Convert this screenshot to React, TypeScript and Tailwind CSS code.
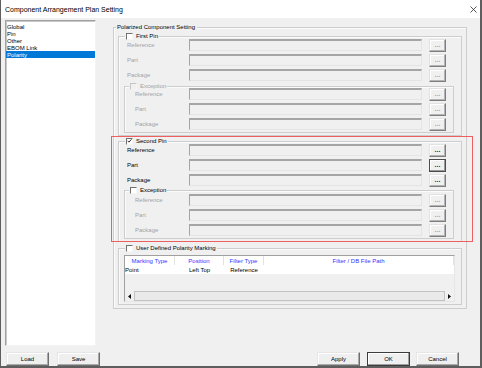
import type { ReactNode } from 'react'

const GRAY = 'text-[#a3a3a3]'

function CheckBox({ checked = false, disabled = false }: { checked?: boolean; disabled?: boolean }) {
  return (
    <span
      className={`flex h-[7px] w-[7px] shrink-0 items-center justify-center border border-r-[#f6f6f6] border-b-[#f6f6f6] ${
        disabled ? 'border-t-[#c6c6c6] border-l-[#c6c6c6] bg-[#f0f0f0]' : 'border-t-[#707070] border-l-[#707070] bg-white'
      }`}
    >
      {checked && (
        <svg width="6" height="6" viewBox="0 0 6 6">
          <path d="M0.8 2.8 L2.3 4.4 L5.3 1" stroke="#1a1a1a" strokeWidth="1.1" fill="none" />
        </svg>
      )}
    </span>
  )
}

function GroupBox({
  legend,
  legendPos,
  className,
  children,
}: {
  legend: ReactNode
  legendPos: string
  className: string
  children: ReactNode
}) {
  return (
    <div className={`relative border border-[#cdcdcd] shadow-[inset_1px_1px_0_#fbfbfb] ${className}`}>
      <div className={`absolute -top-[5px] flex h-[8px] items-center gap-[2px] bg-[#f0f0f0] px-[1px] ${legendPos}`}>
        {legend}
      </div>
      {children}
    </div>
  )
}

function Field() {
  return (
    <div className="h-[12px] w-[233px] shrink-0 border border-t-2 border-t-[#a5a5a5] border-l-[#a5a5a5] border-r-[#e4e4e4] border-b-[#e4e4e4] bg-[#f0f0f0]" />
  )
}

function DotsButton({ disabled = false, focused = false }: { disabled?: boolean; focused?: boolean }) {
  return (
    <div
      className={`ml-[7px] flex h-[13px] w-[17px] shrink-0 items-center justify-center border bg-[#f0f0f0] text-[7px] font-bold ${
        focused
          ? 'border-[#4c4c4c] shadow-[inset_-1px_-1px_0_#9a9a9a,inset_1px_1px_0_#ffffff]'
          : 'border-t-[#e2e2e2] border-l-[#e2e2e2] border-r-[#7e7e7e] border-b-[#7e7e7e] shadow-[inset_-1px_-1px_0_#b4b4b4,inset_1px_1px_0_#ffffff]'
      } ${disabled ? 'text-[#a9a9a9]' : 'text-[#303030]'}`}
    >
      <span className="-mt-[3px]">...</span>
    </div>
  )
}

function FieldRow({
  label,
  pad,
  width,
  disabled = false,
  focused = false,
}: {
  label: string
  pad: string
  width: string
  disabled?: boolean
  focused?: boolean
}) {
  return (
    <div className={`flex h-[12px] items-start ${pad}`}>
      <span className={`flex h-[12px] shrink-0 items-center ${width} ${disabled ? GRAY : 'text-black'}`}>{label}</span>
      <Field />
      <DotsButton disabled={disabled} focused={focused} />
    </div>
  )
}

function PinGroup({
  title,
  checked,
  enabled,
  exceptionEnabled,
  mt,
  exPad,
}: {
  title: string
  checked: boolean
  enabled: boolean
  exceptionEnabled: boolean
  mt: string
  exPad: string
}) {
  return (
    <GroupBox
      className={`ml-[4px] w-[344px] pb-[2px] pt-[2px] ${mt}`}
      legendPos="left-[6px]"
      legend={
        <>
          <CheckBox checked={checked} />
          <span className="ml-[1px] text-black">{title}</span>
        </>
      }
    >
      <div className="flex flex-col gap-[3px]">
        <FieldRow label="Reference" pad="pl-[8px]" width="w-[62px]" disabled={!enabled} />
        <FieldRow label="Part" pad="pl-[8px]" width="w-[62px]" disabled={!enabled} focused={enabled} />
        <FieldRow label="Package" pad="pl-[8px]" width="w-[62px]" disabled={!enabled} />
      </div>
      <GroupBox
        className={`ml-[5px] w-[330px] pb-[2px] ${exPad} ${enabled ? 'mt-[4px]' : 'mt-[5px]'}`}
        legendPos="left-[4px]"
        legend={
          <>
            <CheckBox disabled={!exceptionEnabled} />
            <span className={`ml-[1px] ${exceptionEnabled ? 'text-black' : GRAY}`}>Exception</span>
          </>
        }
      >
        <div className="flex flex-col gap-[3px]">
          <FieldRow label="Reference" pad="pl-[10px]" width="w-[54px]" disabled />
          <FieldRow label="Part" pad="pl-[10px]" width="w-[54px]" disabled />
          <FieldRow label="Package" pad="pl-[10px]" width="w-[54px]" disabled />
        </div>
      </GroupBox>
    </GroupBox>
  )
}

function Arrow({ dir }: { dir: 'left' | 'right' }) {
  return (
    <svg width="3" height="5" viewBox="0 0 3 5">
      <path d={dir === 'left' ? 'M3 0 L0 2.5 L3 5 Z' : 'M0 0 L3 2.5 L0 5 Z'} fill="#111" />
    </svg>
  )
}

function MarkingTable() {
  const head = 'flex h-full items-center justify-center border-r border-[#e2e2e2] text-[#3434ff]'
  return (
    <div className="ml-[5px] flex h-[47px] w-[331px] flex-col border border-t-[#a0a0a0] border-l-[#a0a0a0] border-r-[#e6e6e6] border-b-[#e6e6e6] bg-[#f0f0f0]">
      <div className="flex h-[9px] shrink-0 bg-white">
        <span className={`${head} w-[50px]`}>Marking Type</span>
        <span className={`${head} w-[49px]`}>Position</span>
        <span className={`${head} w-[40px]`}>Filter Type</span>
        <span className={`${head} flex-1`}>Filter / DB File Path</span>
      </div>
      <div className="flex h-[9px] shrink-0 items-center bg-white">
        <span className="w-[50px]">Point</span>
        <span className="w-[49px] text-center">Left Top</span>
        <span className="w-[40px] text-center">Reference</span>
        <span className="flex-1" />
      </div>
      <div className="flex-1" />
      <div className="flex h-[10px] shrink-0">
        <div className="flex w-[9px] items-center justify-center">
          <Arrow dir="left" />
        </div>
        <div className="flex-1 border border-[#c2c2c2] bg-[#eaeaea]" />
        <div className="flex w-[9px] items-center justify-center">
          <Arrow dir="right" />
        </div>
      </div>
    </div>
  )
}

function WinButton({ label, isDefault = false, className = '' }: { label: string; isDefault?: boolean; className?: string }) {
  return (
    <div
      className={`flex h-[14px] w-[43px] items-center justify-center border bg-[#efefef] ${
        isDefault
          ? 'border-[#3c3c3c] shadow-[inset_-1px_-1px_0_#a0a0a0,inset_1px_1px_0_#ffffff]'
          : 'border-t-[#e6e6e6] border-l-[#e6e6e6] border-r-[#6e6e6e] border-b-[#6e6e6e] shadow-[inset_-1px_-1px_0_#a9a9a9,inset_1px_1px_0_#ffffff]'
      } ${className}`}
    >
      {label}
    </div>
  )
}

const pages = ['Global', 'Pin', 'Other', 'EBOM Link', 'Polarity']

export default function App() {
  return (
    <div className="relative flex h-[368px] w-[482px] flex-col border-b-2 border-l border-r-2 border-[#5e5e5e] bg-[#f0f0f0] font-['Liberation_Sans',Arial,sans-serif] text-[6px] leading-none text-black">
      {/* title bar */}
      <div className="flex h-[18px] shrink-0 items-center justify-between bg-white pl-[4px] pr-[3px]">
        <span className="text-[7px]">Component Arrangement Plan Setting</span>
        <svg width="7" height="7" viewBox="0 0 7 7">
          <path d="M0.5 0.5 L6.5 6.5 M6.5 0.5 L0.5 6.5" stroke="#2a2a2a" strokeWidth="0.8" />
        </svg>
      </div>

      <div className="mt-[2px] flex h-[326px] shrink-0 pl-[4px]">
        {/* page list */}
        <div className="h-[326px] w-[91px] shrink-0 border border-t-[#a0a0a0] border-l-[#a0a0a0] border-r-[#f4f4f4] border-b-[#f4f4f4] bg-white pt-[2px] shadow-[inset_1px_1px_0_#c8c8c8]">
          {pages.map((p) => (
            <div
              key={p}
              className={`flex h-[7px] items-center pl-[1px] ${p === 'Polarity' ? 'bg-[#0078d7] text-white' : ''}`}
            >
              {p}
            </div>
          ))}
        </div>

        {/* polarized component setting */}
        <GroupBox
          className="ml-[17px] mt-[7px] flex h-[282px] w-[354px] flex-col pb-[4px]"
          legendPos="left-[2px]"
          legend={<span className="pr-[1px]">Polarized Component Setting</span>}
        >
          <PinGroup title="First Pin" checked={false} enabled={false} exceptionEnabled={false} mt="mt-[8px]" exPad="pt-[1px]" />
          <PinGroup title="Second Pin" checked enabled exceptionEnabled mt="mt-[5px]" exPad="pt-[3px]" />

          <GroupBox
            className="ml-[4px] mt-[6px] w-[344px] pb-[2px] pt-[6px]"
            legendPos="left-[6px]"
            legend={
              <>
                <CheckBox />
                <span className="ml-[1px]">User Defined Polarity Marking</span>
              </>
            }
          >
            <MarkingTable />
          </GroupBox>
        </GroupBox>
      </div>

      {/* bottom buttons */}
      <div className="mt-[6px] flex h-[14px] shrink-0">
        <WinButton label="Load" className="ml-[5px]" />
        <WinButton label="Save" className="ml-[8px] w-[42px]" />
        <WinButton label="Apply" className="ml-auto" />
        <WinButton label="OK" isDefault className="ml-[7px]" />
        <WinButton label="Cancel" className="ml-[6px] mr-[21px]" />
      </div>

      {/* highlight */}
      <div className="absolute left-[110px] top-[136px] h-[106px] w-[362px] border border-[#ef5f5f]" />
    </div>
  )
}
